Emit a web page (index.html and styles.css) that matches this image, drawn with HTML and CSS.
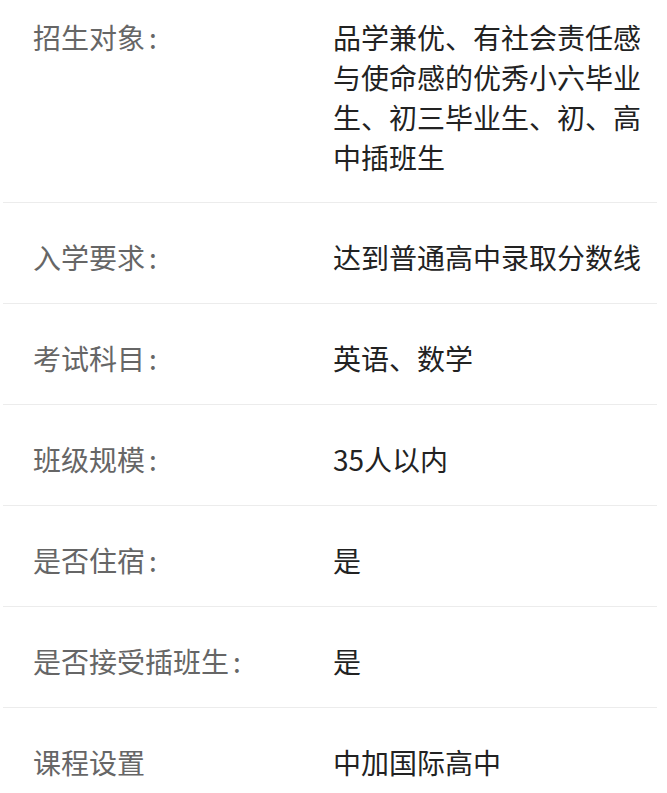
FILE: index.html
```html
<!DOCTYPE html>
<html lang="zh-CN">
<head>
<meta charset="utf-8">
<title>招生信息</title>
<link rel="stylesheet" href="styles.css">
</head>
<body>
<div class="info-list">
  <div class="row first">
    <div class="label">招生对象<span class="colon">:</span></div>
    <div class="value">品学兼优、有社会责任感与使命感的优秀小六毕业生、初三毕业生、初、高中插班生</div>
  </div>
  <div class="row">
    <div class="label">入学要求<span class="colon">:</span></div>
    <div class="value">达到普通高中录取分数线</div>
  </div>
  <div class="row">
    <div class="label">考试科目<span class="colon">:</span></div>
    <div class="value">英语、数学</div>
  </div>
  <div class="row">
    <div class="label">班级规模<span class="colon">:</span></div>
    <div class="value">35人以内</div>
  </div>
  <div class="row">
    <div class="label">是否住宿<span class="colon">:</span></div>
    <div class="value">是</div>
  </div>
  <div class="row">
    <div class="label">是否接受插班生<span class="colon">:</span></div>
    <div class="value">是</div>
  </div>
  <div class="row">
    <div class="label">课程设置</div>
    <div class="value">中加国际高中</div>
  </div>
</div>
</body>
</html>
```
FILE: styles.css
```css
html, body {
  margin: 0;
  padding: 0;
  background: #ffffff;
}
body {
  font-family: "Noto Sans CJK SC", "Noto Sans", sans-serif;
  font-size: 28px;
  line-height: 40px;
  overflow: hidden;
}
.info-list {
  margin-left: 3px;
  width: 654px;
}
.row {
  display: grid;
  grid-template-columns: 300px 1fr;
  padding: 34px 0 26px 30px;
  border-bottom: 1px solid #ececec;
}
.row.first {
  padding-top: 17px;
  padding-bottom: 25px;
}
.label {
  color: #666666;
}
.colon {
  margin-left: 4px;
}
.value {
  color: #222222;
}
```
